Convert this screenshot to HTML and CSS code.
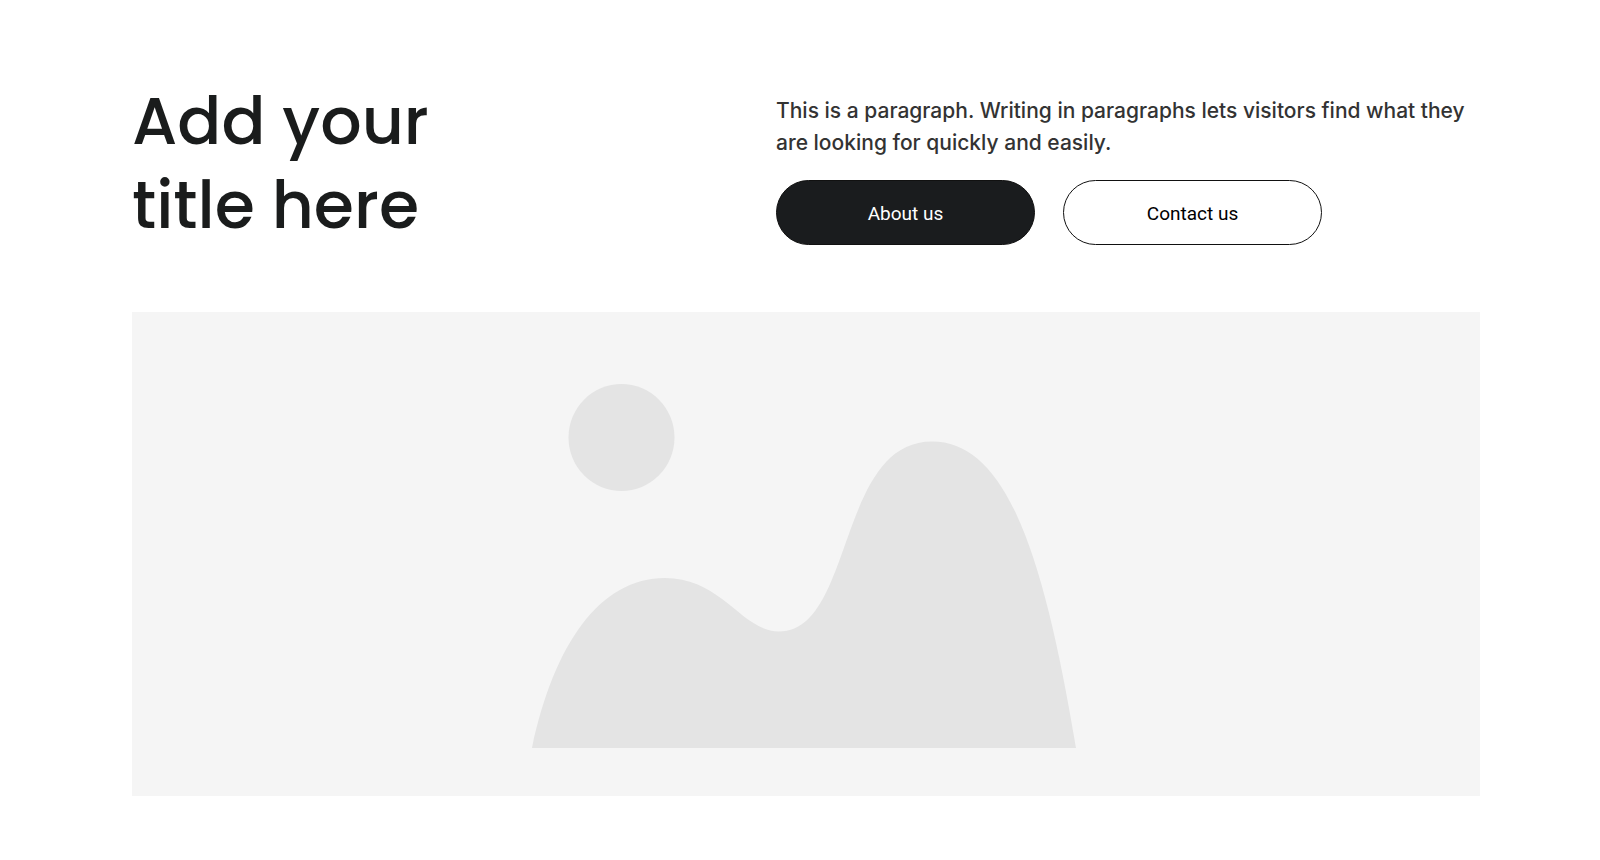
FILE: index.html
```html
<!DOCTYPE html>
<html lang="en">
<head>
<meta charset="utf-8">
<meta name="viewport" content="width=device-width, initial-scale=1">
<title>Add your title here</title>
<link rel="stylesheet" href="styles.css">
</head>
<body>
<main class="page">
  <header class="intro">
    <h1 class="title">Add your<br>title here</h1>
    <div class="details">
      <p class="text">This is a paragraph. Writing in paragraphs lets visitors find what they are looking for quickly and easily.</p>
      <div class="actions">
        <button class="button button-solid" type="button">About us</button>
        <button class="button button-outline" type="button">Contact us</button>
      </div>
    </div>
  </header>
  <div class="placeholder">
    <svg class="scene" viewBox="0 0 544 364" role="img" aria-label="Image placeholder">
      <ellipse cx="89.5" cy="53.5" rx="53" ry="53.5"/>
      <path d="M0 364C22 260 68 194 133 194C190 194 210 247.5 247 247.5C322 247.5 305 57.5 400 57.5C475 57.5 512 172 544 364Z"/>
    </svg>
  </div>
</main>
</body>
</html>
```
FILE: styles.css
```css
* {
  box-sizing: border-box;
}

body {
  margin: 0;
  background: #fff;
  color: #1a1c1e;
  font-family: "Inter", sans-serif;
}

.page {
  padding: 80px 120px 64px 132px;
}

.intro {
  display: grid;
  grid-template-columns: 644fr 704fr;
  align-items: start;
}

.title {
  margin: 0;
  color: #1a1c1c;
  font-family: "Poppins", "Inter", sans-serif;
  font-size: 65px;
  font-weight: 500;
  line-height: 84px;
}

.details {
  padding-top: 15px;
}

.text {
  margin: 0 0 21px;
  color: #333;
  font-size: 21px;
  font-weight: 500;
  line-height: 32px;
}

.actions {
  display: flex;
  flex-wrap: wrap;
  gap: 28px;
}

.button {
  width: 259px;
  height: 65px;
  padding: 2px 0 0;
  border: 1px solid #111;
  border-radius: 33px;
  font-family: "Roboto", sans-serif;
  font-size: 19px;
}

.button-solid {
  background: #1a1c1e;
  color: #fff;
}

.button-outline {
  background: #fff;
  color: #000;
}

.placeholder {
  display: flex;
  justify-content: center;
  margin-top: 64px;
  padding: 72px 4px 48px 0;
  background: #f5f5f5;
}

.scene {
  width: 544px;
  max-width: 100%;
  fill: #e4e4e4;
}
```
